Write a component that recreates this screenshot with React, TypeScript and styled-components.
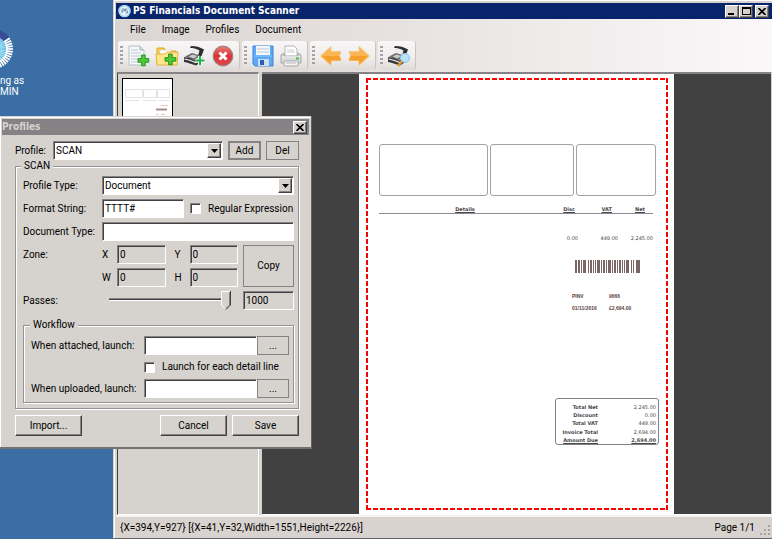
import React from "react";
import styled, { createGlobalStyle, css } from "styled-components";

const face = "#d6d3ce";
const shade = "#848284";
const titleFont = '"DejaVu Sans Condensed", "DejaVu Sans", sans-serif';
const uiFont = 'Roboto, "Liberation Sans", sans-serif';

const GlobalStyle = createGlobalStyle`
  *, *::before, *::after { box-sizing: border-box; }
  html, body { margin: 0; height: 100%; overflow: hidden; }
  #root { height: 100%; }
  button, input, select { font: inherit; color: inherit; margin: 0; border-radius: 0; }
`;

const sunken = css`
  border: 1px solid;
  border-color: ${shade} #fff #fff ${shade};
  box-shadow: inset 1px 1px 0 #424142;
`;

const raised = css`
  border: 1px solid;
  border-color: #fff #424142 #424142 #fff;
  box-shadow: inset -1px -1px 0 ${shade};
`;

const Desktop = styled.main`
  position: relative;
  height: 100vh;
  background: #3a6ea5;
  font: 10px/14px ${uiFont};
  color: #000;
  display: flex;
  overflow: hidden;
`;

const Shortcut = styled.div`
  width: 113px;
  flex: none;
  padding-top: 28px;
  color: #fff;
  font: 10px/11px ${uiFont};
  svg { display: block; margin-bottom: 5px; }
  p { margin: 0; }
`;

/* ---------- main window ---------- */

const Window = styled.section`
  flex: 1;
  min-width: 0;
  display: flex;
  flex-direction: column;
  background: ${face};
  border-left: 1px solid #d6d3ce;
  border-bottom: 1px solid #63616b;
  box-shadow: inset 1px 1px 0 #fff;
  padding: 3px 0 0 2px;
`;

const TitleBar = styled.header`
  height: 16px;
  flex: none;
  display: flex;
  align-items: center;
  gap: 2px;
  padding: 0 3px 0 2px;
  background: #08246b;
  color: #fff;
`;

const Title = styled.h1`
  flex: 1;
  margin: 0;
  font: bold 10px/14px ${titleFont};
`;

const CaptionButtons = styled.div`
  display: flex;
  button + button + button { margin-left: 2px; }
`;

const CaptionButton = styled.button`
  width: 14px;
  height: 13px;
  padding: 0;
  display: grid;
  place-items: center;
  background: ${face};
  color: #000;
  ${raised}
`;

const Chrome = styled.div`
  flex: none;
  background: linear-gradient(to right, #dad5d2, #e6e1df 40%, #fbf8fa);
`;

const MenuBar = styled.nav`
  display: flex;
  height: 22px;
  align-items: center;
  padding-left: 7px;
`;

const MenuItem = styled.button`
  border: 0;
  background: none;
  padding: 0 7px;
  margin-right: 2px;
`;

const ToolStrip = styled.div`
  display: flex;
  gap: 3px;
  padding: 0 0 2px 2px;
`;

const ToolGroup = styled.div`
  display: flex;
  gap: 4px;
  align-items: center;
  height: 29px;
  padding: 0 4px 0 2px;
  border-radius: 3px;
  background: linear-gradient(#f8f6f6, #efecec 60%, #dedad8);
  box-shadow: 1px 0 0 #c9c4c2;
`;

const Grip = styled.span`
  width: 3px;
  height: 20px;
  background: repeating-linear-gradient(#a5a2a5 0 2px, transparent 2px 4px);
`;

const ToolButton = styled.button`
  width: 24px;
  height: 24px;
  padding: 0;
  border: 0;
  background: none;
  svg { display: block; }
`;

const Body = styled.div`
  flex: 1;
  min-height: 0;
  display: flex;
  gap: 3px;
  padding-left: 1px;
  padding-right: 1px;
`;

const ThumbPane = styled.aside`
  width: 142px;
  flex: none;
  padding: 4px;
  border: 1px solid;
  border-width: 2px 1px 1px;
  border-color: ${shade} #fff #fff #424142;
`;

const Thumb = styled.div`
  width: 51px;
  height: 72px;
  border: 1px solid #000;
  background: #fff;
`;

const ViewPane = styled.div`
  flex: 1;
  min-width: 0;
  display: flex;
  justify-content: center;
  background: #424142;
  border-top: 2px solid ${shade};
  border-bottom: 1px solid #fff;
`;

const StatusBar = styled.footer`
  flex: none;
  height: 23px;
  display: flex;
  align-items: center;
  justify-content: space-between;
  padding: 0 2px 0 4px;
  border-top: 2px solid #f7f3f3;
  background: #d9d3cf;
`;

const PageCount = styled.span`
  display: flex;
  align-items: flex-end;
  gap: 5px;
`;

/* ---------- scanned page ---------- */

const dashX = "repeating-linear-gradient(to right, #f00 0 5px, transparent 5px 7px)";
const dashY = "repeating-linear-gradient(#f00 0 5px, transparent 5px 7px)";

const Paper = styled.article`
  width: 315px;
  padding: 4px 6px 4px 7px;
  background: #fff;
  color: #4a484a;
  font: 5px/8px "DejaVu Sans", sans-serif;
  display: flex;
`;

const Selection = styled.div`
  flex: 1;
  display: flex;
  flex-direction: column;
  background:
    ${dashX} top / 100% 2px no-repeat,
    ${dashX} bottom / 100% 2px no-repeat,
    ${dashY} left / 2px 100% no-repeat,
    ${dashY} right / 2px 100% no-repeat;
  padding: 66px 9px 65px 13px;
`;

const AddressRow = styled.div`
  display: grid;
  grid-template-columns: 109fr 83fr 80fr;
  gap: 2px;
  height: 52px;
  margin-right: 3px;
  div { border: 1px solid #a5a2a5; border-radius: 3px; }
`;

const Lines = styled.table`
  margin-top: 9px;
  margin-right: 6px;
  border-collapse: collapse;
  table-layout: fixed;
  th, td { padding: 0; text-align: right; font-weight: normal; }
  th { border-bottom: 1px solid #8c8a94; font-weight: bold; text-decoration: underline; }
  th:first-child { text-align: center; padding-right: 0; }
  th:last-child { padding-right: 8px; }
  th:nth-child(3) { padding-right: 6px; }
  th:nth-child(2) { padding-right: 3px; }
  td { padding-top: 20px; }
`;

const Stamp = styled.div`
  align-self: flex-end;
  width: 87px;
  margin-top: 18px;
  color: #5a4042;
  font-family: "Liberation Sans", sans-serif;
  svg { display: block; margin-left: 3px; }
  dl {
    margin: 18px 0 0;
    display: grid;
    grid-template-columns: 37px 1fr;
    row-gap: 4px;
    font-weight: bold;
  }
  dd, dt { margin: 0; }
`;

const Totals = styled.table`
  align-self: flex-end;
  width: 104px;
  height: 47px;
  margin-top: auto;
  padding: 4px 2px 0 4px;
  border: 1px solid #848284;
  border-radius: 3px;
  border-spacing: 0;
  th, td { padding: 0; text-align: right; white-space: nowrap; }
  th { width: 38px; }
  td { font-weight: normal; }
  tr:last-child > * { font-weight: bold; text-decoration: underline; }
`;

/* ---------- profiles dialog ---------- */

const Dialog = styled.form`
  position: absolute;
  left: 0;
  top: 116px;
  width: 312px;
  padding: 3px 2px 11px;
  background: ${face};
  border-right: 1px solid #636163;
  border-bottom: 2px solid #737173;
  box-shadow: inset 0 1px 0 ${face}, inset 1px 2px 0 #fff;
`;

const DialogTitle = styled.header`
  height: 16px;
  display: flex;
  align-items: center;
  justify-content: space-between;
  padding-right: 2px;
  background: ${shade};
  color: ${face};
  h2 { margin: 0; font: bold 10px/14px ${titleFont}; }
`;

const DialogBody = styled.div`
  padding: 6px 10px 0 13px;
`;

const ProfileRow = styled.div`
  display: grid;
  grid-template-columns: 33px 1fr 33px 33px;
  column-gap: 5px;
  align-items: center;
`;

const SelectBox = styled.div`
  display: grid;
  height: 19px;
  background: #fff;
  align-items: center;
  padding: 1px;
  ${sunken}
  select {
    grid-area: 1 / 1;
    appearance: none;
    border: 0;
    outline: 0;
    background: none;
    padding: 0 18px 0 1px;
    width: 100%;
    height: 15px;
  }
`;

const Arrow = styled.span`
  grid-area: 1 / 1;
  justify-self: end;
  width: 14px;
  height: 15px;
  display: grid;
  place-items: center;
  background: ${face};
  pointer-events: none;
  ${raised}
`;

const FlatButton = styled.button<{ $strong?: boolean }>`
  height: 19px;
  padding: 0;
  background: ${face};
  border: ${(p) => (p.$strong ? "2px" : "1px")} solid ${shade};
`;

const PushButton = styled.button`
  width: 67px;
  height: 21px;
  padding: 0;
  background: ${face};
  ${raised}
`;

const Group = styled.fieldset<{ $inner?: boolean }>`
  min-width: 0;
  margin: 0;
  border: 1px solid #949294;
  box-shadow: 1px 1px 0 #fff, inset 1px 1px 0 #fff;
  padding: ${(p) => (p.$inner ? "5px 4px 4px 7px" : "0 4px 5px 7px")};
  legend {
    padding: 0 3px;
    margin-left: ${(p) => (p.$inner ? "-1px" : "-2px")};
    line-height: 12px;
    background: ${face};
  }
`;

const Fields = styled.div`
  display: grid;
  grid-template-columns: 79px 1fr;
  row-gap: 4px;
  align-items: center;
  margin: 4px 0 9px;
`;

const FormatRow = styled.div`
  display: flex;
  align-items: center;
  gap: 6px;
`;

const TextBox = styled.input<{ $w?: number; $grey?: boolean }>`
  width: ${(p) => (p.$w ? `${p.$w}px` : "100%")};
  min-width: 0;
  height: 19px;
  padding: 0 2px;
  outline: 0;
  background: ${(p) => (p.$grey ? face : "#fff")};
  ${sunken}
`;

const Check = styled.label`
  display: flex;
  align-items: center;
  gap: 7px;
  input {
    appearance: none;
    width: 11px;
    height: 11px;
    background: #fff;
    ${sunken}
  }
`;

const ZoneLabel = styled.span`
  align-self: start;
  padding-top: 3px;
`;

const Zone = styled.div`
  display: grid;
  grid-template-columns: 1fr 51px;
  column-gap: 5px;
`;

const ZoneGrid = styled.div`
  display: grid;
  grid-template-columns: 15px 1fr 24px 1fr;
  align-items: center;
  row-gap: 4px;
  label:nth-of-type(even) { padding-left: 9px; }
`;

const CopyButton = styled(FlatButton)`
  height: 100%;
`;

const Passes = styled.div`
  display: flex;
  justify-content: space-between;
  padding-left: 5px;
`;

const thumbShape = encodeURIComponent(
  `<svg xmlns="http://www.w3.org/2000/svg" width="10" height="19"><path d="M0 0h10v14l-5 5-5-5z" fill="${face}"/><path d="M.5 14V.5H9" fill="none" stroke="#fff"/><path d="M.5 14l4.500 4.500" stroke="#fff"/><path d="M8.500 1v13l-4 4" fill="none" stroke="${shade}"/><path d="M9.500 0v14L5 18.500" fill="none" stroke="#424142"/></svg>`
);

const Slider = styled.input`
  appearance: none;
  width: 124px;
  height: 19px;
  background: linear-gradient(${shade}, ${shade}) 2px 7px / 120px 1px no-repeat,
    linear-gradient(#424142, #424142) 2px 8px / 120px 1px no-repeat,
    linear-gradient(#fff, #fff) 2px 9px / 120px 1px no-repeat;
  &::-webkit-slider-thumb {
    appearance: none;
    width: 10px;
    height: 19px;
    background: url("data:image/svg+xml,${thumbShape}") no-repeat;
  }
`;

const Launch = styled.div`
  display: grid;
  grid-template-columns: 113px 1fr 32px;
  align-items: center;
  row-gap: 5px;
  label { white-space: nowrap; }
`;

const LaunchCheck = styled(Check)`
  grid-column: 2 / 4;
`;

const Actions = styled.footer`
  display: flex;
  gap: 5px;
  margin-top: 6px;
  button:first-child { margin-right: auto; }
`;

/* ---------- icons ---------- */

const Plus = ({ x, y, s = 1 }: { x: number; y: number; s?: number }) => (
  <path
    transform={`translate(${x} ${y}) scale(${s})`}
    d="M4 0h4v4h4v4H8v4H4V8H0V4h4z"
    fill="#4fc83a"
    stroke="#1f8f1c"
    strokeWidth="1"
  />
);

const AddPageIcon = () => (
  <svg width="24" height="24" viewBox="0 0 24 24">
    <path d="M2 2h11l4 4v15H2z" fill="#f4f8fb" stroke="#b4bec6" />
    <path d="M13 2v4h4" fill="#d6dfe6" stroke="#a9b4bd" />
    <path d="M4 6h7M4 9h10M4 12h10M4 15h8M4 18h7" stroke="#c0c9d1" />
    <Plus x={11} y={11} s={0.9} />
  </svg>
);

const AddFolderIcon = () => (
  <svg width="24" height="24" viewBox="0 0 24 24">
    <path d="M2 20V4h7l2 3h10v13z" fill="#f5cf57" stroke="#dca72c" />
    <path d="M5 6h11v6H5z" fill="#fff" stroke="#d8d0b8" strokeWidth=".6" />
    <path d="M1 10h9l2-2h11l-1 13H2z" fill="#ffe58a" stroke="#e2b13c" />
    <Plus x={10} y={10} s={0.9} />
  </svg>
);

const ScannerShape = () => (
  <>
    <path d="M8 2c5 0 9 1 13 3.500L18.500 12l-4 1 2-6.500C13 4.500 10 4 7 4z" fill="#2e2e30" />
    <path d="M9 5c3 0 5 .6 7 1.800L14.500 12 6 10z" fill="#eceaea" />
    <path d="M2 12.500L9 9l8 2.500-1 2-5 3z" fill="#6a6a6e" />
    <path d="M5.500 12.500L9.500 10.500l5 1.500-4 2.500z" fill="#c9c9cc" />
    <path d="M1 13c3 .3 8 1.500 11 3.500L19 13l1.500 3.500L13 21.500C9 20 4 18.500 1 18z" fill="#38383b" />
    <path d="M1.500 15c4 .5 7 1.500 11 3.500l7-3.500" fill="none" stroke="#f4f4f4" strokeWidth="1.200" />
  </>
);

const AddScanIcon = () => (
  <svg width="24" height="24" viewBox="0 0 24 24">
    <ScannerShape />
    <path d="M17 12v9M12.500 16.500h9" stroke="#fff" strokeWidth="4" />
    <path d="M17 12v9M12.500 16.500h9" stroke="#1fae4a" strokeWidth="2" />
  </svg>
);

const DeleteIcon = () => (
  <svg width="24" height="24" viewBox="0 0 24 24">
    <defs>
      <linearGradient id="red" x1="0" y1="0" x2="0" y2="1">
        <stop offset="0" stopColor="#f07a78" />
        <stop offset=".5" stopColor="#d93237" />
        <stop offset="1" stopColor="#e0484c" />
      </linearGradient>
    </defs>
    <circle cx="12" cy="12" r="9.800" fill="url(#red)" stroke="#9d8583" strokeWidth="1.200" />
    <path d="M8.500 8.500l7 7M15.500 8.500l-7 7" stroke="#fff" strokeWidth="3" />
  </svg>
);

const SaveIcon = () => (
  <svg width="24" height="24" viewBox="0 0 24 24">
    <path d="M2 2h20v20H4l-2-2z" fill="#5aaaf5" stroke="#3d83dc" />
    <path d="M5 2h14v9H5z" fill="#f5f8fb" />
    <path d="M6 5h12M6 8h12" stroke="#b9c6d4" />
    <path d="M7 15h11v7H7z" fill="#cfe0f2" />
    <path d="M9 16h4v5H9z" fill="#2460b8" />
    <path d="M3 12h18" stroke="#8cc6fb" />
  </svg>
);

const PrintIcon = () => (
  <svg width="24" height="24" viewBox="0 0 24 24">
    <path d="M6 2h9l3 3v8H6z" fill="#fff" stroke="#b4b4b4" />
    <path d="M8 6h7M8 8h8" stroke="#ccc" />
    <path d="M2 11l3-2v3h14V9l3 2v8H2z" fill="#d9dbdd" stroke="#a4a7aa" />
    <path d="M3 13h18" stroke="#f8f8f8" />
    <path d="M5 17h14v5H5z" fill="#f4f4f4" stroke="#aaa" />
    <path d="M7 19h10" stroke="#bbb" />
    <path d="M17 14.500h3" stroke="#48c434" strokeWidth="2" />
  </svg>
);

const ArrowIcon = ({ flip }: { flip?: boolean }) => (
  <svg width="24" height="24" viewBox="0 0 24 24">
    <path
      transform={flip ? "matrix(-1 0 0 1 24 0)" : undefined}
      d="M1.500 12L12 2.500v5h10l-1.500 4.500L22 16.500H12v5z"
      fill="#fbb552"
      stroke="#f7c98c"
    />
    <path
      transform={flip ? "matrix(-1 0 0 1 24 0)" : undefined}
      d="M3 12h17.500l1.500 4.500H12v4z"
      fill="#f5a02a"
    />
  </svg>
);

const PreviewScanIcon = () => (
  <svg width="24" height="24" viewBox="0 0 24 24">
    <ScannerShape />
    <path d="M15 17l-4 5" stroke="#e09a2c" strokeWidth="2.500" />
    <circle cx="18" cy="14" r="4.500" fill="#b9e0f7" stroke="#8fc3e6" />
  </svg>
);

const Burst = () => (
  <svg width="14" height="42" viewBox="0 0 14 42">
    {Array.from({ length: 44 }, (_, i) => {
      const a = (i / 44) * Math.PI * 2;
      const c = Math.cos(a);
      const s = Math.sin(a);
      return (
        <g key={i}>
          <path d={`M${-7 + 7 * c} ${21 + 7 * s}L${-7 + 15 * c} ${21 + 15 * s}`} stroke="#8fdcf5" strokeWidth="1.500" />
          <path
            d={`M${-7 + 13 * c} ${21 + 13 * s}L${-7 + 20 * c} ${21 + 20 * s}`}
            stroke={s < -0.65 ? "#3d3d94" : "#fff"}
            strokeWidth="1.700"
          />
        </g>
      );
    })}
  </svg>
);

const AppIcon = () => (
  <svg width="13" height="14" viewBox="0 0 13 14">
    <circle cx="6.500" cy="7" r="6.300" fill="#a9d8ee" />
    <circle cx="6.500" cy="7" r="4.500" fill="#e9f4f8" />
    <path d="M4 9V5h2.500v2H4M9.500 5H7.500v2h2v2h-2" fill="none" stroke="#557a9c" strokeWidth=".8" />
  </svg>
);

const Triangle = () => (
  <svg width="7" height="4" viewBox="0 0 7 4">
    <path d="M0 0h7L3.500 4z" />
  </svg>
);

const CloseGlyph = () => (
  <svg width="8" height="7" viewBox="0 0 8 7">
    <path d="M.5 0l7 7M7.500 0l-7 7" stroke="#000" strokeWidth="1.600" />
  </svg>
);

const Barcode = () => {
  const bars = [
    [0, 2], [3, 2], [6, 1], [8, 3], [13, 1], [15, 2], [18, 1], [20, 1], [22, 3], [26, 1], [28, 2],
    [31, 1], [33, 3], [37, 1], [39, 2], [42, 1], [44, 2], [47, 1], [49, 1], [51, 3], [56, 1], [58, 1], [61, 4],
  ];
  return (
    <svg width="66" height="14" viewBox="0 0 66 14">
      {bars.map(([x, w]) => (
        <rect key={x} x={x} y="0" width={w} height="13" fill="#7a6666" />
      ))}
    </svg>
  );
};

const ThumbDrawing = () => (
  <svg width="49" height="70" viewBox="0 0 49 70">
    <g fill="none" stroke="#e4e2e4">
      <path d="M2.500 10.500h17v8h-17zM20.500 10.500h13v8h-13zM34.500 10.500h12v8h-12z" />
      <path d="M2 21.500h44" strokeDasharray="14 4 14 2" />
    </g>
    <path d="M33 30.500h11" stroke="#a88a8e" strokeWidth="2" />
    <path d="M38 26.500h7M33 35.500h3M38 35.500h4M33 37.500h4M38 37.500h5" stroke="#dcc8cc" />
  </svg>
);

const SizeGrip = () => (
  <svg width="10" height="10" viewBox="0 0 10 10" fill="#a5a2a0">
    <path d="M8 0h2v2H8zM4 4h2v2H4zM8 4h2v2H8zM0 8h2v2H0zM4 8h2v2H4zM8 8h2v2H8z" />
  </svg>
);

const Combo = ({ id, value }: { id: string; value: string }) => (
  <SelectBox>
    <select id={id} defaultValue={value}>
      <option>{value}</option>
    </select>
    <Arrow>
      <Triangle />
    </Arrow>
  </SelectBox>
);

const tools = [
  [
    ["Add page", <AddPageIcon />],
    ["Add folder", <AddFolderIcon />],
    ["Scan", <AddScanIcon />],
    ["Delete", <DeleteIcon />],
  ],
  [
    ["Save", <SaveIcon />],
    ["Print", <PrintIcon />],
  ],
  [
    ["Previous", <ArrowIcon />],
    ["Next", <ArrowIcon flip />],
  ],
  [["Preview scan", <PreviewScanIcon />]],
] as [string, React.ReactNode][][];

const totals = [
  ["Total Net", "2,245.00"],
  ["Discount", "0.00"],
  ["Total VAT", "449.00"],
  ["Invoice Total", "2,694.00"],
  ["Amount Due", "2,694.00"],
];

const zoneFields = ["X", "Y", "W", "H"];

const ScannedPage = () => (
  <Paper>
    <Selection>
      <AddressRow>
        <div />
        <div />
        <div />
      </AddressRow>
      <Lines>
        <colgroup>
          <col />
          <col width="27" />
          <col width="40" />
          <col width="35" />
        </colgroup>
        <thead>
          <tr>
            <th>Details</th>
            <th>Disc</th>
            <th>VAT</th>
            <th>Net</th>
          </tr>
        </thead>
        <tbody>
          <tr>
            <td />
            <td>0.00</td>
            <td>449.00</td>
            <td>2,245.00</td>
          </tr>
        </tbody>
      </Lines>
      <Stamp>
        <Barcode />
        <dl>
          <dt>PINV</dt>
          <dd>9666</dd>
          <dt>01/11/2016</dt>
          <dd>£2,694.00</dd>
        </dl>
      </Stamp>
      <Totals>
        <tbody>
          {totals.map(([name, amount]) => (
            <tr key={name}>
              <th>{name}</th>
              <td>{amount}</td>
            </tr>
          ))}
        </tbody>
      </Totals>
    </Selection>
  </Paper>
);

const ProfilesDialog = () => (
  <Dialog aria-label="Profiles" onSubmit={(e) => e.preventDefault()}>
    <DialogTitle>
      <h2>Profiles</h2>
      <CaptionButton type="button" aria-label="Close">
        <CloseGlyph />
      </CaptionButton>
    </DialogTitle>
    <DialogBody>
      <ProfileRow>
        <label htmlFor="profile">Profile:</label>
        <Combo id="profile" value="SCAN" />
        <FlatButton type="button" $strong>Add</FlatButton>
        <FlatButton type="button">Del</FlatButton>
      </ProfileRow>
      <Group>
        <legend>SCAN</legend>
        <Fields>
          <label htmlFor="type">Profile Type:</label>
          <Combo id="type" value="Document" />
          <label htmlFor="format">Format String:</label>
          <FormatRow>
            <TextBox id="format" $w={82} defaultValue="TTTT#" />
            <Check>
              <input type="checkbox" />
              Regular Expression
            </Check>
          </FormatRow>
          <label htmlFor="doctype">Document Type:</label>
          <TextBox id="doctype" />
          <ZoneLabel>Zone:</ZoneLabel>
          <Zone>
            <ZoneGrid>
              {zoneFields.map((name) => (
                <React.Fragment key={name}>
                  <label htmlFor={`zone${name}`}>{name}</label>
                  <TextBox id={`zone${name}`} $grey defaultValue="0" />
                </React.Fragment>
              ))}
            </ZoneGrid>
            <CopyButton type="button">Copy</CopyButton>
          </Zone>
          <label htmlFor="passes">Passes:</label>
          <Passes>
            <Slider id="passes" type="range" min={0} max={1000} defaultValue={1000} />
            <TextBox $w={51} $grey aria-label="Passes value" defaultValue="1000" />
          </Passes>
        </Fields>
        <Group $inner>
          <legend>Workflow</legend>
          <Launch>
            <label htmlFor="attached">When attached, launch:</label>
            <TextBox id="attached" />
            <FlatButton type="button">...</FlatButton>
            <LaunchCheck>
              <input type="checkbox" />
              Launch for each detail line
            </LaunchCheck>
            <label htmlFor="uploaded">When uploaded, launch:</label>
            <TextBox id="uploaded" />
            <FlatButton type="button">...</FlatButton>
          </Launch>
        </Group>
      </Group>
      <Actions>
        <PushButton type="button">Import...</PushButton>
        <PushButton type="button">Cancel</PushButton>
        <PushButton type="submit">Save</PushButton>
      </Actions>
    </DialogBody>
  </Dialog>
);

export default function App() {
  return (
    <>
      <GlobalStyle />
      <Desktop>
        <Shortcut>
          <Burst />
          <p>ng as</p>
          <p>MIN</p>
        </Shortcut>
        <Window>
          <TitleBar>
            <AppIcon />
            <Title>PS Financials Document Scanner</Title>
            <CaptionButtons>
              <CaptionButton aria-label="Minimize">
                <svg width="8" height="7" viewBox="0 0 8 7"><path d="M0 5h6v2H0z" /></svg>
              </CaptionButton>
              <CaptionButton aria-label="Maximize">
                <svg width="9" height="8" viewBox="0 0 9 8"><path d="M0 0h9v8H0zM1 2v5h7V2z" fillRule="evenodd" /></svg>
              </CaptionButton>
              <CaptionButton aria-label="Close">
                <CloseGlyph />
              </CaptionButton>
            </CaptionButtons>
          </TitleBar>
          <Chrome>
            <MenuBar>
              {["File", "Image", "Profiles", "Document"].map((m) => (
                <MenuItem key={m}>{m}</MenuItem>
              ))}
            </MenuBar>
            <ToolStrip>
              {tools.map((group, i) => (
                <ToolGroup key={i}>
                  <Grip />
                  {group.map(([name, icon]) => (
                    <ToolButton key={name} aria-label={name}>
                      {icon}
                    </ToolButton>
                  ))}
                </ToolGroup>
              ))}
            </ToolStrip>
          </Chrome>
          <Body>
            <ThumbPane>
              <Thumb>
                <ThumbDrawing />
              </Thumb>
            </ThumbPane>
            <ViewPane>
              <ScannedPage />
            </ViewPane>
          </Body>
          <StatusBar>
            <span>{"{X=394,Y=927} [{X=41,Y=32,Width=1551,Height=2226}]"}</span>
            <PageCount>
              Page 1/1
              <SizeGrip />
            </PageCount>
          </StatusBar>
        </Window>
        <ProfilesDialog />
      </Desktop>
    </>
  );
}
